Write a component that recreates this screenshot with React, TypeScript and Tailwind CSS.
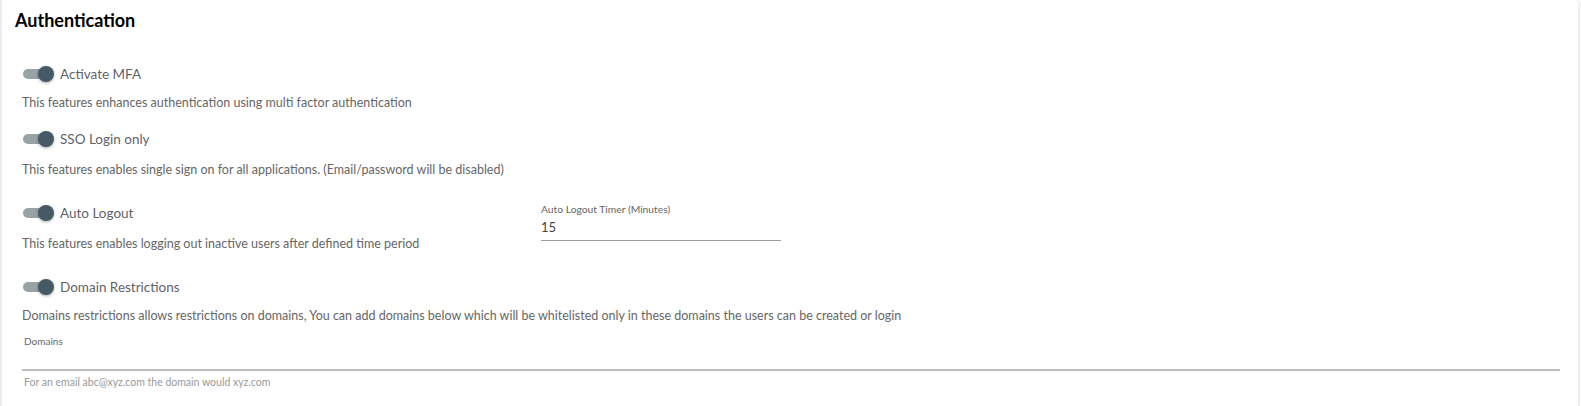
import React from "react";

function Toggle() {
  return (
    <div className="relative w-[32px] h-[16px] shrink-0">
      <div className="absolute left-[1px] top-[3px] w-[28px] h-[10px] rounded-full bg-[#98a3a8]" />
      <div className="absolute left-[16px] top-0 w-[16px] h-[16px] rounded-full bg-[#455a64] shadow-[0_1px_3px_rgba(0,0,0,0.35)]" />
    </div>
  );
}

function Row({
  label,
  desc,
  className = "",
  descClass = "mt-[11px]",
}: {
  label: string;
  desc: string;
  className?: string;
  descClass?: string;
}) {
  return (
    <div className={className}>
      <div className="flex items-center gap-[6px] h-[20px]">
        <Toggle />
        <span className="text-[13.5px] text-[#5f6368]">{label}</span>
      </div>
      <div className={`${descClass} text-[12.5px] text-[#666] leading-[16px]`}>{desc}</div>
    </div>
  );
}

export default function App() {
  return (
    <div
      className="w-[1581px] h-[406px] bg-white overflow-hidden"
      style={{ fontFamily: "Lato, 'Noto Sans', sans-serif" }}
    >
      <div className="w-[1579px] h-[406px] bg-white border-l-2 border-r border-[#ececec] rounded-tr-[4px] shadow-[1px_0_2px_rgba(0,0,0,0.08)]">
        <div className="pl-[13px] pt-[8px] text-[18px] font-bold text-black leading-[24px]">
          Authentication
        </div>
        <div className="pl-[20px] pr-[18px]">
          <Row
            className="mt-[32px]"
            label="Activate MFA"
            desc="This features enhances authentication using multi factor authentication"
          />
          <Row
            className="mt-[18px]"
            descClass="mt-[13px]"
            label="SSO Login only"
            desc="This features enables single sign on for all applications. (Email/password will be disabled)"
          />
          <div className="mt-[25px] flex">
            <Row
              className="w-[519px]"
              descClass="mt-[13px]"
              label="Auto Logout"
              desc="This features enables logging out inactive users after defined time period"
            />
            <div className="w-[240px]">
              <div className="text-[10.3px] text-[#666] leading-[12px]">Auto Logout Timer (Minutes)</div>
              <div className="mt-[4px] text-[13px] text-[#444] leading-[16px]">15</div>
              <div className="mt-[5px] h-[1px] bg-[#9e9e9e]" />
            </div>
          </div>
          <Row
            className="mt-[25px]"
            label="Domain Restrictions"
            desc="Domains restrictions allows restrictions on domains, You can add domains below which will be whitelisted only in these domains the users can be created or login"
          />
          <div className="mt-[11px]">
            <div className="text-[10px] text-[#666] leading-[12px] pl-[2px]">Domains</div>
            <div className="mt-[22px] h-[2px] bg-[#bdbdbd]" />
            <div className="mt-[5px] text-[10.5px] text-[#999] leading-[12px] pl-[2px]">
              For an email abc@xyz.com the domain would xyz.com
            </div>
          </div>
        </div>
      </div>
    </div>
  );
}
